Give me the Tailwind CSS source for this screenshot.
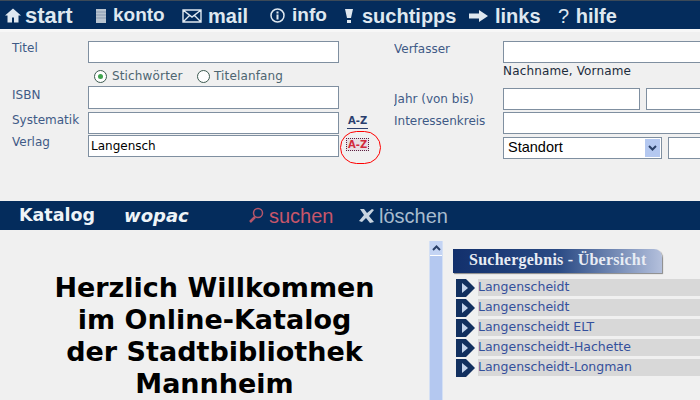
<!DOCTYPE html>
<html lang="de">
<head>
  <meta charset="UTF-8" />
  <title>Katalog wopac</title>
  <script src="https://cdn.jsdelivr.net/npm/@tailwindcss/browser@4"></script>
</head>
<body class="w-[700px] h-[400px] overflow-hidden bg-[#f0f0f0] font-['DejaVu_Sans',sans-serif]">

  <!-- top nav -->
  <nav class="h-[29px] bg-[#042c5c] border-t border-[#3c4a58] pt-[1px] flex items-center pl-[5px] font-['Liberation_Sans',sans-serif] font-bold text-[20px] text-[#dfe8f0] whitespace-nowrap">
    <a class="flex items-center w-[90px] text-[22px]">
      <svg class="w-[16px] h-[15px] mr-[4px]" viewBox="0 0 16 14"><path d="M8 0L0 7h2.500v7H7V9h2v5h4.500V7H16z" fill="#dfe8f0"/></svg>start
    </a>
    <a class="flex items-center w-[87px] text-[19px]">
      <svg class="w-[12px] h-[16px] mr-[6px]" viewBox="0 0 12 16"><path d="M1 1h10v14H1z" fill="#b8c4d0"/><path d="M1 4h10M1 7h10M1 10h10" stroke="#8a9ab0"/></svg>konto
    </a>
    <a class="flex items-center w-[88px]">
      <svg class="w-[20px] h-[14px] mr-[6px]" viewBox="0 0 20 14" fill="none" stroke="#dfe8f0" stroke-width="1.4"><path d="M1 1h18v12H1zM1 1l9 7 9-7M1 13l7-7M19 13l-7-7"/></svg>mail
    </a>
    <a class="flex items-center w-[74px] text-[19px]">
      <svg class="w-[15px] h-[15px] mr-[7px]" viewBox="0 0 15 15"><circle cx="7.5" cy="7.5" r="6.5" fill="none" stroke="#dfe8f0" stroke-width="1.5"/><path d="M6.500 6.500h2v5h-2zM6.500 3.500h2v2h-2z" fill="#dfe8f0"/></svg>info
    </a>
    <a class="flex items-center w-[125px]">
      <svg class="w-[10px] h-[16px] mr-[8px]" viewBox="0 0 10 16"><path d="M1 1h8L7 10H3zM3 12h4v3H3z" fill="#dfe8f0"/></svg>suchtipps
    </a>
    <a class="flex items-center w-[89px]">
      <svg class="w-[19px] h-[12px] mr-[7px]" viewBox="0 0 19 12"><path d="M0 3.500h10V0l9 6-9 6V8.500H0z" fill="#dfe8f0"/></svg>links
    </a>
    <a class="font-normal">? <b class="ml-[1px]">hilfe</b></a>
  </nav>
  <div class="h-[3px] bg-[#f7f7f7]"></div>

  <!-- search form -->
  <form class="h-[169px] flex text-[12px] text-[#3f5a86]">
    <div class="w-[394px] pl-3 pt-[9px] shrink-0">
      <div class="flex h-[23px]">
        <label class="w-[76px] -mt-[2px]">Titel</label>
        <div class="w-[251px] h-[22px] bg-white border border-[#7f8fa0]"></div>
      </div>
      <div class="flex items-center h-[22px] pl-[82px] pt-[2px] text-[#4d6570] tracking-[0.15px]">
        <span class="w-[13px] h-[13px] rounded-full border border-[#3c5a50] bg-white flex items-center justify-center mr-[5px]"><span class="w-[5px] h-[5px] rounded-full bg-[#3fa34d]"></span></span>
        <span class="w-[85px]">Stichwörter</span>
        <span class="w-[13px] h-[13px] rounded-full border border-[#3c5a50] bg-white mr-[4px]"></span>
        <span>Titelanfang</span>
      </div>
      <div class="flex h-[26px]">
        <label class="w-[76px]">ISBN</label>
        <div class="w-[251px] h-[23px] bg-white border border-[#7f8fa0]"></div>
      </div>
      <div class="flex h-[23px]">
        <label class="w-[76px] -mt-[1px]">Systematik</label>
        <div class="w-[251px] h-[22px] bg-white border border-[#7f8fa0]"></div>
        <a class="ml-[8px] mt-[2px] h-[15px] px-[1px] border-b border-[#2a3f6e] text-[10px] leading-[14px] font-bold text-[#2a3f6e]">A-Z</a>
      </div>
      <div class="flex h-[23px] relative">
        <label class="w-[76px] -mt-[2px]">Verlag</label>
        <div class="w-[251px] h-[22px] bg-white border border-[#7f8fa0] pl-[2px] text-black leading-[21px]">Langensch</div>
        <a class="ml-[7px] mt-[3px] h-[13px] px-[1px] border border-dotted border-[#5a2040] text-[10px] leading-[11px] font-bold text-[#d22b3c] bg-[#e8dfe4]">A-Z</a>
        <span class="absolute left-[328px] top-[-4px] w-[41px] h-[33px] rounded-full border border-[#ff0000]"></span>
      </div>
    </div>
    <div class="flex-1 pt-[9px] overflow-hidden">
      <div class="flex h-[23px]">
        <label class="w-[109px] shrink-0 -mt-[1px]">Verfasser</label>
        <div class="w-[300px] shrink-0 h-[22px] bg-white border border-[#7f8fa0]"></div>
      </div>
      <div class="h-[24px] pl-[109px] text-[#1c2c3c] leading-[14px] tracking-[0.15px]">Nachname, Vorname</div>
      <div class="flex h-[24px]">
        <label class="w-[109px] shrink-0 pt-[2px]">Jahr (von bis)</label>
        <div class="w-[137px] shrink-0 h-[22px] bg-white border border-[#7f8fa0]"></div>
        <div class="w-[100px] shrink-0 h-[22px] ml-[6px] bg-white border border-[#7f8fa0]"></div>
      </div>
      <div class="flex h-[25px]">
        <label class="w-[109px] shrink-0">Interessenkreis</label>
        <div class="w-[300px] shrink-0 h-[22px] bg-white border border-[#7f8fa0]"></div>
      </div>
      <div class="flex h-[22px] pl-[109px]">
        <div class="w-[159px] shrink-0 h-[22px] bg-white border border-[#7f8fa0] flex items-center justify-between pl-[4px] pr-[1px] text-black text-[14.500px] font-['Liberation_Sans',sans-serif]">
          Standort
          <span class="w-[15px] h-[18px] bg-[#b4c8f0] flex items-center justify-center">
            <svg class="w-[9px] h-[6px]" viewBox="0 0 9 6" fill="none" stroke="#2a4068" stroke-width="2"><path d="M1 1l3.500 3.500L8 1"/></svg>
          </span>
        </div>
        <div class="w-[60px] shrink-0 h-[22px] ml-[6px] bg-white border border-[#7f8fa0]"></div>
      </div>
    </div>
  </form>

  <!-- action bar -->
  <div class="h-[29px] bg-[#042c5c] flex items-center whitespace-nowrap">
    <span class="ml-[19px] w-[105px] font-bold text-[17.500px] text-[#eef4f8]">Katalog</span>
    <span class="w-[124px] font-bold italic text-[18px] text-[#eef4f8]">wopac</span>
    <svg class="w-[16px] h-[17px] mr-[5px]" viewBox="0 0 16 17" fill="none" stroke="#b5566a" stroke-width="1.500"><circle cx="10" cy="6" r="4.500"/><path d="M7 10l-5 5" stroke-width="2.500"/></svg>
    <span class="w-[90px] font-['Liberation_Sans',sans-serif] text-[20px] text-[#c8566a]">suchen</span>
    <svg class="w-[16px] h-[14px] mr-[4px]" viewBox="0 0 16 14" fill="#c8d4e0"><path d="M1 0l4 0 3 4 5-4 2 1-5 6 5 6-4 1-4-5-4 4-3-1 5-6z"/></svg>
    <span class="font-['Liberation_Sans',sans-serif] text-[20px] text-[#a8bccf]">löschen</span>
  </div>

  <!-- content -->
  <main class="flex h-[170px] overflow-hidden">
    <div class="w-[429px] shrink-0 pt-[42px] text-center font-bold text-[27px] leading-[32px] text-black">
      <p>Herzlich Willkommen</p>
      <p>im Online-Katalog</p>
      <p>der Stadtbibliothek</p>
      <p>Mannheim</p>
    </div>
    <div class="w-[14px] shrink-0 mt-[11px] bg-[#b4c8f0] border-x border-[#d4e0f4] relative">
      <span class="block h-[15px] bg-[#c4d4f4] border-b border-white flex items-center justify-center">
        <svg class="w-[9px] h-[6px]" viewBox="0 0 9 6" fill="none" stroke="#2a4068" stroke-width="2"><path d="M1 5l3.500-3.500L8 5"/></svg>
      </span>
    </div>
    <div class="flex-1 pl-[10px] pt-[19px]">
      <h3 class="w-[209px] h-[24px] bg-gradient-to-r from-[#12306c] via-[#2a4a84] to-[#b4c0dc] rounded-tr-[8px] shadow-[1px_1px_1px_#888] pl-[16px] font-['Liberation_Serif',serif] font-bold text-[16px] leading-[21px] tracking-[0.25px] text-[#e8ecf4]">Suchergebnis - Übersicht</h3>
      <ul class="mt-[6px] ml-[3px] text-[12.500px] text-[#34509c]">
        <li class="flex h-[20px]"><svg class="w-[19px] h-[18px] mr-[3px] shrink-0" viewBox="0 0 19 18"><path d="M0 0h10l9 9-9 9H0z" fill="#12305f"/><path d="M6 4l6 5-6 5z" fill="#c4d4ec"/></svg><span class="flex-1 h-[17px] leading-[16px] bg-[#d8d8d8]">Langenscheidt</span></li>
        <li class="flex h-[20px]"><svg class="w-[19px] h-[18px] mr-[3px] shrink-0" viewBox="0 0 19 18"><path d="M0 0h10l9 9-9 9H0z" fill="#12305f"/><path d="M6 4l6 5-6 5z" fill="#c4d4ec"/></svg><span class="flex-1 h-[17px] leading-[16px] bg-[#d8d8d8]">Langenscheidt</span></li>
        <li class="flex h-[20px]"><svg class="w-[19px] h-[18px] mr-[3px] shrink-0" viewBox="0 0 19 18"><path d="M0 0h10l9 9-9 9H0z" fill="#12305f"/><path d="M6 4l6 5-6 5z" fill="#c4d4ec"/></svg><span class="flex-1 h-[17px] leading-[16px] bg-[#d8d8d8]">Langenscheidt ELT</span></li>
        <li class="flex h-[20px]"><svg class="w-[19px] h-[18px] mr-[3px] shrink-0" viewBox="0 0 19 18"><path d="M0 0h10l9 9-9 9H0z" fill="#12305f"/><path d="M6 4l6 5-6 5z" fill="#c4d4ec"/></svg><span class="flex-1 h-[17px] leading-[16px] bg-[#d8d8d8]">Langenscheidt-Hachette</span></li>
        <li class="flex h-[20px]"><svg class="w-[19px] h-[18px] mr-[3px] shrink-0" viewBox="0 0 19 18"><path d="M0 0h10l9 9-9 9H0z" fill="#12305f"/><path d="M6 4l6 5-6 5z" fill="#c4d4ec"/></svg><span class="flex-1 h-[17px] leading-[16px] bg-[#d8d8d8]">Langenscheidt-Longman</span></li>
      </ul>
    </div>
  </main>
</body>
</html>
